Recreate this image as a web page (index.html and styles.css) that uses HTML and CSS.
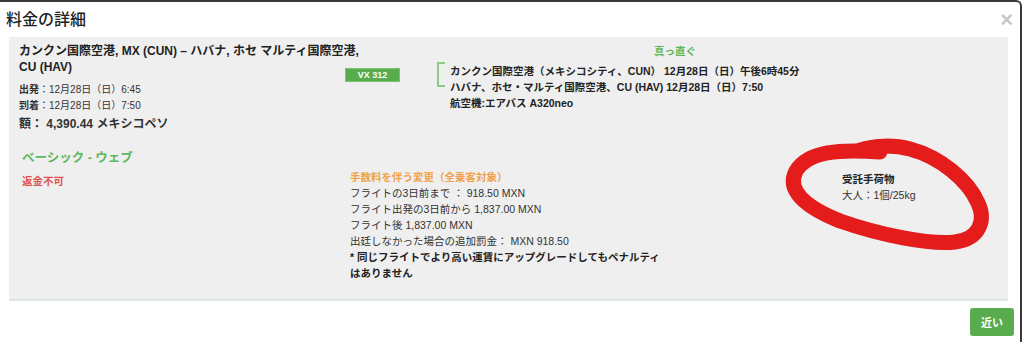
FILE: index.html
```html
<!DOCTYPE html>
<html lang="ja">
<head>
  <meta charset="UTF-8" />
  <title>料金の詳細</title>
  <link rel="stylesheet" href="styles.css">
</head>
<body>
  <div class="modal">
    <div class="modal-header">
      <h2>料金の詳細</h2>
      <span class="close">&times;</span>
    </div>

    <div class="fare-box">
      <div class="flight-row">
        <div class="route">
          <h3>カンクン国際空港, MX (CUN) – ハバナ, ホセ マルティ国際空港, CU (HAV)</h3>
          <p><b>出発</b>：12月28日（日）6:45</p>
          <p><b>到着</b>：12月28日（日）7:50</p>
          <p class="amount">額： 4,390.44 メキシコペソ</p>
        </div>
        <div class="flight-no">
          <span class="badge">VX 312</span>
        </div>
        <div class="segment">
          <div class="direct">真っ直ぐ</div>
          <div class="legs">
            <p>カンクン国際空港（メキシコシティ、CUN） 12月28日（日）午後6時45分</p>
            <p>ハバナ、ホセ・マルティ国際空港、CU (HAV) 12月28日（日）7:50</p>
          </div>
          <p class="aircraft">航空機:エアバス A320neo</p>
        </div>
      </div>

      <div class="rules-row">
        <div class="fare-type">
          <div class="fare-name">ベーシック - ウェブ</div>
          <div class="refund">返金不可</div>
        </div>
        <div class="changes">
          <div class="changes-title">手数料を伴う変更（全乗客対象）</div>
          <p>フライトの3日前まで ： 918.50 MXN</p>
          <p>フライト出発の3日前から 1,837.00 MXN</p>
          <p>フライト後 1,837.00 MXN</p>
          <p>出廷しなかった場合の追加罰金： MXN 918.50</p>
          <p class="note">* 同じフライトでより高い運賃にアップグレードしてもペナルティはありません</p>
        </div>
        <div class="baggage">
          <div class="baggage-title">受託手荷物</div>
          <p>大人：1個/25kg</p>
        </div>
      </div>

      <!-- marker scribble around baggage -->
      <svg class="scribble" viewBox="0 0 230 140" width="230" height="140">
        <path d="M110 27 C 70 24, 38 26, 26 46 C 16 65, 35 82, 70 96 C 110 110, 160 120, 185 117 C 210 114, 216 95, 208 78 C 198 55, 170 32, 140 24 C 125 20, 105 20, 90 25" fill="none" stroke="#e41c1c" stroke-width="15" stroke-linecap="round"/>
      </svg>
    </div>

    <div class="modal-footer">
      <button class="btn-close">近い</button>
    </div>
  </div>
</body>
</html>
```

FILE: styles.css
```css
* {
  box-sizing: border-box;
  margin: 0;
  padding: 0;
}

body {
  font-family: 'Liberation Sans', 'Noto Sans CJK JP', sans-serif;
  background: #fff;
  color: #333;
  width: 1024px;
  height: 342px;
  overflow: hidden;
}

.modal {
  width: 1022px;
  height: 342px;
  border-top: 2px solid #3a3a3a;
  border-right: 2px solid #3a3a3a;
  border-top-right-radius: 6px;
  background: #fff;
}

.modal-header {
  display: flex;
  justify-content: space-between;
  align-items: center;
  height: 35px;
  padding: 0 7px 0 6px;
}

.modal-header h2 {
  font-size: 16px;
  font-weight: 500;
  color: #222;
  line-height: 20px;
}

.close {
  font-size: 22px;
  font-weight: bold;
  color: #c8c8c8;
  line-height: 20px;
}

.fare-box {
  position: relative;
  margin: 0 12px 0 9px;
  height: 264px;
  background: #efefef;
  border-bottom: 2px solid #dce5e1;
  padding: 6px 10px 0;
}

.flight-row {
  display: grid;
  grid-template-columns: 326px 92px 476px;
}

.route h3 {
  font-size: 12px;
  line-height: 16px;
  font-weight: bold;
  color: #222;
  width: 350px;
  margin-bottom: 7px;
}

.route p {
  font-size: 10px;
  line-height: 16px;
}

.route .amount {
  font-size: 12px;
  font-weight: bold;
  line-height: 18px;
  margin-top: 1px;
}

.flight-no {
  padding-top: 21px;
}

.badge {
  display: inline-block;
  width: 55px;
  height: 14px;
  background: #58ac4d;
  border: 1px solid #7cc275;
  color: #fff;
  font-size: 9px;
  font-weight: bold;
  line-height: 12px;
  text-align: center;
}

.direct {
  text-align: center;
  color: #5cb85c;
  font-size: 10.5px;
  font-weight: bold;
  line-height: 16px;
  margin-bottom: 4px;
}

.legs {
  position: relative;
  padding-left: 13px;
}

.legs::before {
  content: '';
  position: absolute;
  left: 0;
  top: -1px;
  width: 6px;
  height: 21px;
  border: 2px solid #8ccb86;
  border-right: none;
}

.legs p,
.aircraft {
  font-size: 10.5px;
  font-weight: bold;
  line-height: 16px;
  color: #222;
}

.aircraft {
  padding-left: 13px;
}

.rules-row {
  display: grid;
  grid-template-columns: 331px 492px 150px;
  margin-top: 16px;
}

.fare-type {
  padding-left: 3px;
}

.fare-name {
  color: #5cb85c;
  font-size: 12.5px;
  font-weight: bold;
  line-height: 18px;
  margin-bottom: 6px;
}

.refund {
  color: #e0514c;
  font-size: 10.5px;
  font-weight: bold;
  line-height: 16px;
}

.changes {
  padding-top: 20px;
}

.changes-title {
  color: #f0a14a;
  font-size: 10.5px;
  font-weight: bold;
  line-height: 16px;
}

.changes p {
  font-size: 10.5px;
  line-height: 16px;
}

.changes .note {
  font-weight: bold;
  color: #222;
  width: 315px;
}

.baggage {
  padding-top: 22px;
}

.baggage-title {
  font-size: 10.5px;
  font-weight: bold;
  line-height: 16px;
  color: #222;
}

.baggage p {
  font-size: 10.5px;
  line-height: 16px;
}

.scribble {
  position: absolute;
  left: 761px;
  top: 88px;
}

.modal-footer {
  display: flex;
  justify-content: flex-end;
  padding: 7px 6px 0 0;
}

.btn-close {
  width: 44px;
  height: 28px;
  background: #58ac4d;
  color: #fff;
  border: none;
  border-radius: 3px;
  font-family: inherit;
  font-size: 11px;
  font-weight: bold;
}
```
